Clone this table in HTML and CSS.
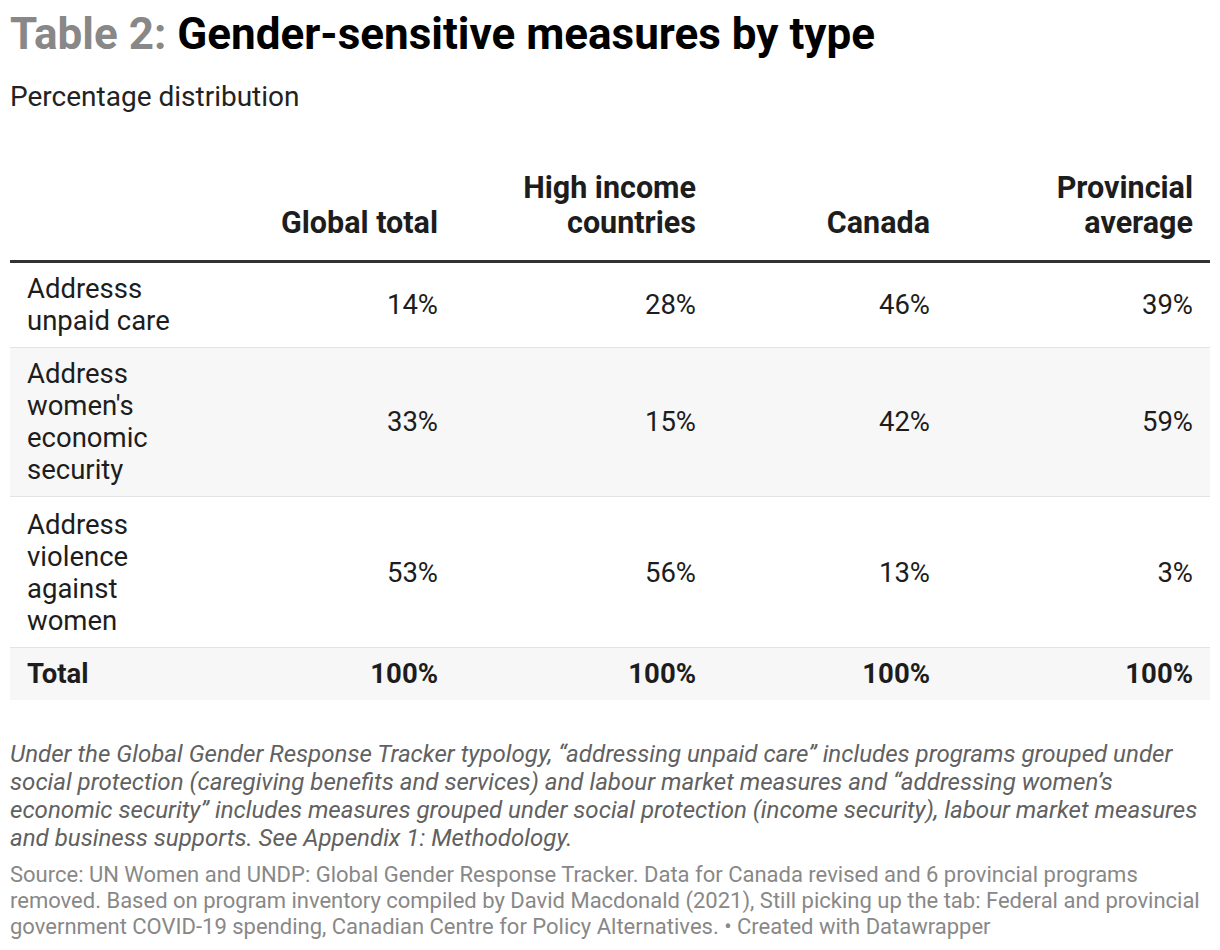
FILE: index.html
```html
<!DOCTYPE html>
<html lang="en">
<head>
<meta charset="utf-8">
<title>Table 2: Gender-sensitive measures by type</title>
<link rel="stylesheet" href="styles.css">
</head>
<body>
<div class="chart">
  <h1 class="title"><span class="title-prefix">Table 2:</span> Gender-sensitive measures by type</h1>
  <p class="subtitle">Percentage distribution</p>
  <table class="data">
    <colgroup>
      <col class="c1"><col class="c2"><col class="c3"><col class="c4"><col class="c5">
    </colgroup>
    <thead>
      <tr>
        <th class="label"></th>
        <th>Global total</th>
        <th>High income countries</th>
        <th>Canada</th>
        <th>Provincial average</th>
      </tr>
    </thead>
    <tbody>
      <tr>
        <td class="label">Addresss unpaid care</td>
        <td>14%</td><td>28%</td><td>46%</td><td>39%</td>
      </tr>
      <tr class="alt">
        <td class="label">Address women's economic security</td>
        <td>33%</td><td>15%</td><td>42%</td><td>59%</td>
      </tr>
      <tr class="tall">
        <td class="label">Address violence against women</td>
        <td>53%</td><td>56%</td><td>13%</td><td>3%</td>
      </tr>
      <tr class="alt total">
        <td class="label">Total</td>
        <td>100%</td><td>100%</td><td>100%</td><td>100%</td>
      </tr>
    </tbody>
  </table>
  <p class="notes">Under the Global Gender Response Tracker typology, “addressing unpaid care” includes programs grouped under social protection (caregiving benefits and services) and labour market measures and “addressing women’s economic security” includes measures grouped under social protection (income security), labour market measures and business supports. See Appendix 1: Methodology.</p>
  <p class="source">Source: UN Women and UNDP: Global Gender Response Tracker. Data for Canada revised and 6 provincial programs removed. Based on program inventory compiled by David Macdonald (2021), Still picking up the tab: Federal and provincial government COVID-19 spending, Canadian Centre for Policy Alternatives. • Created with Datawrapper</p>
</div>
</body>
</html>
```
FILE: styles.css
```css
html, body {
  margin: 0;
  padding: 0;
  background: #ffffff;
}
body {
  font-family: Roboto, "Liberation Sans", sans-serif;
  color: #1d1d1d;
}
.chart {
  padding: 10px 10px 0 10px;
}
.title {
  margin: 0;
  font-size: 44px;
  line-height: 48px;
  font-weight: 700;
  color: #000;
}
.title-prefix {
  color: #888888;
}
.subtitle {
  margin: 23px 0 0 0;
  font-size: 28px;
  line-height: 31px;
  color: #222;
}
.data {
  margin-top: 48px;
  width: 1200px;
  border-collapse: collapse;
  table-layout: fixed;
}
.c1 { width: 180px; }
.c2 { width: 265px; }
.c3 { width: 258px; }
.c4 { width: 234px; }
.c5 { width: 263px; }
.data th {
  font-size: 30.5px;
  line-height: 35px;
  font-weight: 700;
  text-align: right;
  vertical-align: bottom;
  padding: 10px 17px 20px 17px;
  border-bottom: 3px solid #333333;
  color: #1d1d1d;
}
.data td {
  font-size: 27.5px;
  line-height: 32px;
  text-align: right;
  vertical-align: middle;
  padding: 10px 17px 10px 17px;
  border-bottom: 1px solid #e3e3e3;
  color: #1d1d1d;
}
.data td.label {
  text-align: left;
  padding-right: 10px;
}
.data tr.tall td {
  padding-top: 12px;
}
.data tr.alt td {
  background: #f7f7f7;
}
.data tr.total td {
  font-weight: 700;
  border-bottom: none;
}
.notes {
  margin: 40px 0 0 0;
  font-size: 24.1px;
  line-height: 28px;
  font-style: italic;
  color: #616161;
}
.source {
  margin: 10px 0 0 0;
  font-size: 22px;
  line-height: 26px;
  color: #888888;
}
```
